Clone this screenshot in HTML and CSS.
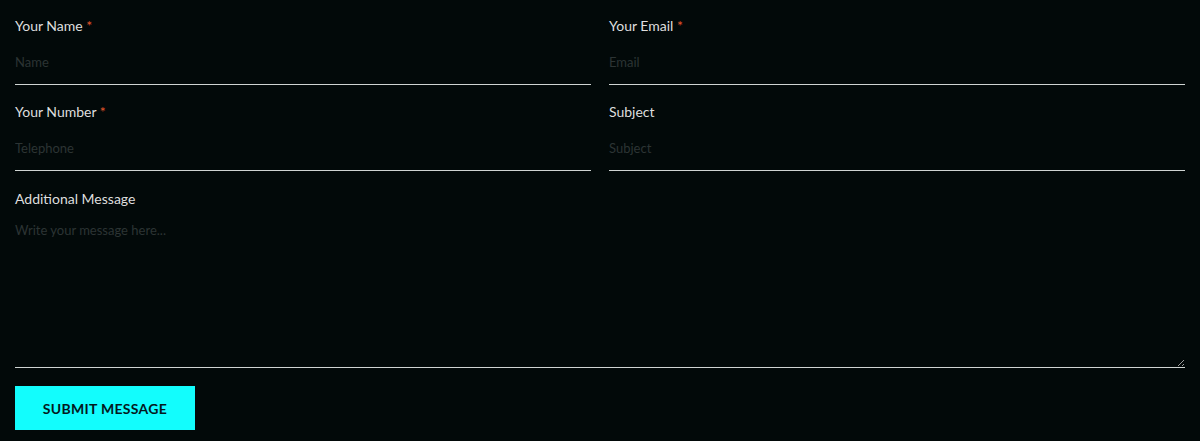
FILE: index.html
```html
<!DOCTYPE html>
<html lang="en">
<head>
<meta charset="UTF-8">
<meta name="viewport" content="width=device-width, initial-scale=1.0">
<title>Contact</title>
<link rel="stylesheet" href="styles.css">
</head>
<body>

<form class="contact-form">
    <div class="field">
        <label>Your Name <span class="req">*</span></label>
        <input type="text" placeholder="Name">
    </div>
    <div class="field">
        <label>Your Email <span class="req">*</span></label>
        <input type="email" placeholder="Email">
    </div>
    <div class="field">
        <label>Your Number <span class="req">*</span></label>
        <input type="tel" placeholder="Telephone">
    </div>
    <div class="field">
        <label>Subject</label>
        <input type="text" placeholder="Subject">
    </div>
    <div class="field wide">
        <label>Additional Message</label>
        <textarea placeholder="Write your message here..."></textarea>
    </div>
    <div class="wide">
        <button type="button" class="submit">Submit Message</button>
    </div>
</form>

</body>
</html>
```

FILE: styles.css
```css
body { margin: 0; padding: 0; background-color: #020909; font-family: 'Lato', 'Noto Sans', sans-serif; color: #dcdcdc; }
.contact-form { display: grid; grid-template-columns: 1fr 1fr; column-gap: 18px; row-gap: 17px; padding: 16px 15px 0; }
.field { display: flex; flex-direction: column; gap: 4px; }
.wide { grid-column: 1 / 3; }
.field label { font-size: 14px; line-height: 20px; color: #dedede; }
.field.wide label { margin-top: 1px; }
.req { color: #e2552a; }
.field input, .field textarea { background: transparent; border: none; border-bottom: 1px solid #cfd4d2; color: #ddd; font-family: inherit; font-size: 13px; outline: none; padding: 0; }
.field input { height: 44px; }
.field textarea { height: 145px; padding-top: 9px; resize: vertical; }
.field input::placeholder, .field textarea::placeholder { color: #2c3434; }
.submit { margin-top: 1px; background-color: #12fdfd; border: none; color: #04191d; font-family: inherit; font-size: 14px; font-weight: 700; text-transform: uppercase; width: 180px; height: 44px; cursor: pointer; letter-spacing: 0.3px; }
```
